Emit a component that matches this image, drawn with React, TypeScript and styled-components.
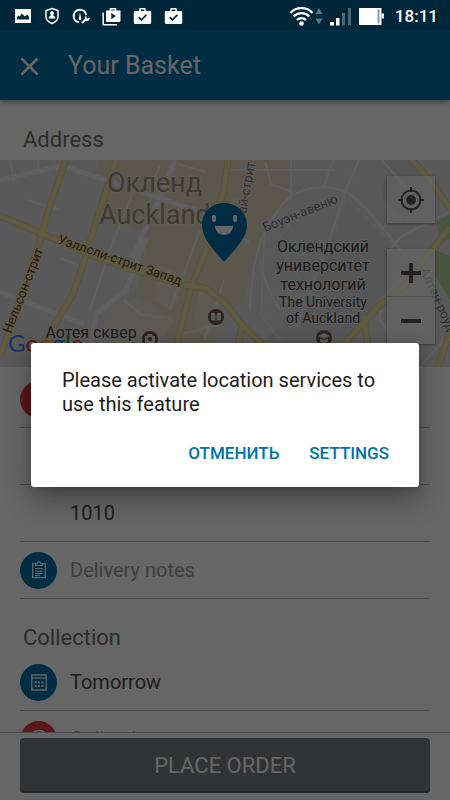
import React from "react";
import styled, { createGlobalStyle } from "styled-components";

const GlobalStyle = createGlobalStyle`
  *, *::before, *::after { box-sizing: border-box; }
  body { margin: 0; background: #fff; font-family: Roboto, "Noto Sans", sans-serif; }
  button, input { font: inherit; }
`;

const Screen = styled.div`
  position: relative;
  display: flex;
  flex-direction: column;
  height: 100vh;
  overflow: hidden;
  background: #fff;
`;

const StatusBar = styled.div`
  position: relative;
  z-index: 3;
  flex: none;
  display: flex;
  align-items: center;
  justify-content: space-between;
  height: 30px;
  padding: 2px 12px 0 14px;
  background: #00263a;
  color: #fff;
`;

const StatusGroup = styled.div<{ $gap: number }>`
  display: flex;
  align-items: center;
  gap: ${(p) => p.$gap}px;
`;

const Clock = styled.time`
  margin-left: 4px;
  font-size: 17px;
  line-height: 24px;
  font-weight: 500;
`;

const Header = styled.header`
  position: relative;
  z-index: 1;
  flex: none;
  display: flex;
  align-items: center;
  gap: 28px;
  height: 70px;
  padding: 2px 19px 0;
  background: #0072ab;
  box-shadow: 0 2px 6px rgba(0, 0, 0, 0.4);
`;

const CloseButton = styled.button`
  display: flex;
  padding: 0;
  border: 0;
  background: none;
  color: #fff;
`;

const Title = styled.h1`
  margin: 0;
  font-size: 25px;
  line-height: 32px;
  font-weight: 400;
  color: #fff;
`;

const Content = styled.main`
  flex: 1;
  min-height: 0;
  overflow: hidden;
`;

const SectionTitle = styled.h2<{ $height: number; $bottom: number }>`
  display: flex;
  align-items: flex-end;
  height: ${(p) => p.$height}px;
  margin: 0;
  padding: 0 23px ${(p) => p.$bottom}px;
  font-size: 22px;
  line-height: 32px;
  font-weight: 400;
  color: #707070;
`;

const MapPanel = styled.section`
  position: relative;
  height: 207px;
  margin-bottom: 4px;
  overflow: hidden;
  background: #e2e2e2;
`;

const MapDrawing = styled.svg`
  display: block;
  width: 100%;
  height: 100%;
`;

const MapControls = styled.div`
  position: absolute;
  top: 16px;
  right: 15px;
  display: flex;
  flex-direction: column;
  gap: 26px;
`;

const ControlGroup = styled.div`
  display: flex;
  flex-direction: column;
  background: rgba(255, 255, 255, 0.6);
  box-shadow: 0 1px 3px rgba(0, 0, 0, 0.4);
`;

const MapButton = styled.button`
  display: flex;
  align-items: center;
  justify-content: center;
  width: 48px;
  height: 47px;
  padding: 0;
  border: 0;
  background: none;
  color: #555;

  & + & {
    height: 48px;
    border-top: 1px solid #c4c4c4;
  }
`;

const Fields = styled.div`
  padding: 0 20px;
`;

const Row = styled.label`
  display: flex;
  align-items: center;
  gap: 13px;
  height: 57px;
  border-bottom: 1px solid #bdbdbd;
`;

const Badge = styled.span<{ $color?: string }>`
  flex: none;
  display: flex;
  align-items: center;
  justify-content: center;
  width: 37px;
  height: 37px;
  border-radius: 50%;
  background: ${(p) => p.$color ?? "transparent"};
  color: #fff;
`;

const Field = styled.input`
  flex: 1;
  min-width: 0;
  padding: 0;
  border: 0;
  outline: 0;
  background: none;
  font-size: 20px;
  line-height: 28px;
  color: #4c4c4c;

  &::placeholder {
    color: #9b9b9b;
    opacity: 1;
  }
`;

const Footer = styled.footer`
  flex: none;
  padding: 5px 20px 7px;
  border-top: 1px solid #b8b8b8;
  background: #fff;
`;

const OrderButton = styled.button`
  width: 100%;
  height: 55px;
  border: 0;
  border-radius: 4px;
  background: #7b7d80;
  box-shadow: inset 0 -2px 0 #626467;
  font-size: 22px;
  line-height: 32px;
  color: #fff;
`;

const Scrim = styled.div`
  position: absolute;
  inset: 0;
  z-index: 2;
  display: flex;
  align-items: center;
  justify-content: center;
  padding: 30px 31px 0;
  background: rgba(0, 0, 0, 0.6);
`;

const Dialog = styled.div`
  flex: 1;
  padding: 25px 22px 14px 31px;
  border-radius: 3px;
  background: #fff;
  box-shadow: 0 14px 28px rgba(0, 0, 0, 0.3), 0 2px 8px rgba(0, 0, 0, 0.2);
`;

const Message = styled.p`
  margin: 0 0 17px;
  font-size: 20px;
  line-height: 24px;
  color: #1c1c1c;
`;

const Actions = styled.div`
  display: flex;
  justify-content: flex-end;
  gap: 14px;
`;

const Action = styled.button`
  height: 40px;
  padding: 0 8px;
  border: 0;
  background: none;
  font-size: 17px;
  line-height: 24px;
  font-weight: 500;
  color: #0072a8;
`;

const PhotoIcon = () => (
  <svg width="18" height="18" viewBox="0 0 18 18" aria-hidden="true">
    <path fill="currentColor" fillRule="evenodd" d="M1 2h16v14H1zM3 12.5h12V9.7l-1.8-2.2-2.4 2-3-3L5.800 9.500 4.600 8.500 3 10z" />
  </svg>
);

const ShieldIcon = () => (
  <svg width="16" height="18" viewBox="0 0 16 18" aria-hidden="true">
    <path fill="none" stroke="currentColor" strokeWidth="1.500" d="M8 1.500 14 3.500v6c0 3.200-2.600 5.700-6 7-3.400-1.300-6-3.800-6-7v-6z" />
    <path fill="currentColor" d="M8 4.200a2 2 0 0 1 1.400 3.400L9.500 9l1.700.8V11.500H4.800V9.800L6.500 9l.1-1.400A2 2 0 0 1 8 4.200z" />
  </svg>
);

const GaugeIcon = () => (
  <svg width="18" height="18" viewBox="0 0 18 18" aria-hidden="true">
    <path fill="none" stroke="currentColor" strokeWidth="2" d="M6.800 15.200A6.300 6.300 0 1 1 14.200 8" />
    <path fill="currentColor" d="M8 5.500 9.200 11.200a1.300 1.300 0 1 1-2.400 0z" />
    <path fill="none" stroke="currentColor" strokeWidth="1.800" d="m10 16 3.500-3.500M13.700 9.400v3h3" />
    <path fill="none" stroke="currentColor" strokeWidth="1.400" d="M13.400 12.800c1.600 1 3.600.2 3.800-1.800" />
  </svg>
);

const ShopIcon = () => (
  <svg width="19" height="19" viewBox="0 0 19 19" aria-hidden="true">
    <path fill="none" stroke="currentColor" strokeWidth="1.500" d="M1.200 5.500v12.200h14M8.500 4V1.800h5V4" />
    <path fill="currentColor" fillRule="evenodd" d="M4 3.500h14.500v10.300a1.200 1.200 0 0 1-1.200 1.200H5.200A1.200 1.200 0 0 1 4 13.800zM9.300 6v6.300L14 9.100z" />
  </svg>
);

const BagCheckIcon = () => (
  <svg width="19" height="18" viewBox="0 0 19 18" aria-hidden="true">
    <path fill="none" stroke="currentColor" strokeWidth="1.600" d="M6.500 4.500 7.300 1.800h4.400l.8 2.700" />
    <path fill="currentColor" d="M1.800 4h15.400a1 1 0 0 1 1 1v10.500a1.500 1.500 0 0 1-1.500 1.500H2.300a1.500 1.500 0 0 1-1.500-1.500V5a1 1 0 0 1 1-1z" />
    <path fill="none" stroke="#00263a" strokeWidth="1.700" d="m5.700 10.200 2.700 2.600 5-5" />
  </svg>
);

const WifiIcon = () => (
  <svg width="34" height="22" viewBox="0 0 34 22" aria-hidden="true">
    <g fill="none" stroke="currentColor" strokeWidth="2.300">
      <path d="M1.300 8a15.500 15.500 0 0 1 22.400 0M4.700 11.500a10.900 10.900 0 0 1 15.600 0M8 15a6.300 6.300 0 0 1 9 0" />
    </g>
    <circle cx="12.500" cy="18.500" r="2.300" fill="currentColor" />
    <path fill="#5d7684" d="m30 3 3.500 6h-7zM30 19.500l3.500-6h-7z" />
  </svg>
);

const SignalIcon = () => (
  <svg width="22" height="19" viewBox="0 0 22 19" aria-hidden="true">
    <path fill="currentColor" d="M0 15h4v3.500H0zM6 11h3.500v7.500H6z" />
    <path fill="#4d6675" d="M12 6h3v12.500h-3zM18 1h3v17.500h-3z" />
  </svg>
);

const BatteryIcon = () => (
  <svg width="25" height="19" viewBox="0 0 25 19" aria-hidden="true">
    <path fill="currentColor" d="M0 1h21v17H0zM22.500 6.500H25v5h-2.500z" />
    <path fill="#8d9ca5" d="M18.500 2.500h2v14h-2z" />
    <path fill="currentColor" d="M21 1h1.500v17H21z" />
  </svg>
);

const CloseIcon = () => (
  <svg width="21" height="21" viewBox="0 0 21 21" aria-hidden="true">
    <path d="m2.500 2.500 16 16m0-16-16 16" fill="none" stroke="currentColor" strokeWidth="2.500" />
  </svg>
);

const LocateIcon = () => (
  <svg width="28" height="28" viewBox="0 0 28 28" aria-hidden="true">
    <circle cx="14" cy="14" r="9.500" fill="none" stroke="currentColor" strokeWidth="2" />
    <circle cx="14" cy="14" r="5" fill="currentColor" />
    <path d="M14 1v5m0 16v5M1 14h5m16 0h5" stroke="currentColor" strokeWidth="2" />
  </svg>
);

const PlusIcon = () => (
  <svg width="22" height="22" viewBox="0 0 22 22" aria-hidden="true">
    <path d="M11 1v20M1 11h20" stroke="currentColor" strokeWidth="4" />
  </svg>
);

const MinusIcon = () => (
  <svg width="22" height="22" viewBox="0 0 22 22" aria-hidden="true">
    <path d="M1 11h20" stroke="currentColor" strokeWidth="4" />
  </svg>
);

const ClipboardIcon = () => (
  <svg width="16" height="18" viewBox="0 0 16 18" fill="none" stroke="currentColor" aria-hidden="true">
    <path strokeWidth="1.300" d="M4.500 2.700H1.700v14h12.600v-14h-2.800" />
    <path strokeWidth="1.200" d="M4.500 4.500V2.700h1.700a1.800 1.800 0 0 1 3.600 0h1.700v1.800z" />
    <path strokeWidth="1.200" d="M4 7.500h8M4 10h8M4 12.500h8M4 14.600h5" />
  </svg>
);

const CalendarIcon = () => (
  <svg width="16" height="17" viewBox="0 0 16 17" fill="none" stroke="currentColor" aria-hidden="true">
    <path strokeWidth="1.300" d="M.8 1h14.400v15H.8zM.8 4.200h14.400" />
    <path strokeWidth="2" strokeDasharray="2 1.500" d="M3.500 8.300h9M3.500 12h9" />
  </svg>
);

const ClockIcon = () => (
  <svg width="20" height="20" viewBox="0 0 20 20" fill="none" stroke="currentColor" aria-hidden="true">
    <circle cx="10" cy="10" r="8.500" strokeWidth="1.400" />
    <path strokeWidth="1.400" d="M10 5v5h4" />
  </svg>
);

const StreetMap = () => (
  <MapDrawing viewBox="0 160 450 207" preserveAspectRatio="xMidYMid slice" role="img" aria-label="Auckland">
    <rect y="160" width="450" height="207" fill="#dedede" />
    <path fill="#e4d9be" d="M98 160h193v38l-26 28-14 40-8 38-22 6-20 57h-30l-12-60-25-10 15-60-15-10-22-6z" />
    <path fill="#d6d6d6" d="m347 200 62 62-40 50-30 34h-80l55-50z" />
    <path fill="#d4d4d4" d="m388 160 30 0 10 20-24 40-22-22z" />
    <path fill="#e7e2cc" d="m108 305 28-4 38 18-14 24h-58zM160 265l26 12-12 32-22-8zM200 286l22 18-12 30-18 0z" />
    <path fill="#b5d69c" d="m436 222 14-7v24l-9 2zM435 250l15 6v44l-15-24z" />
    <g fill="none" stroke="#eeeeee" strokeLinejoin="round">
      <path strokeWidth="5" d="m0 180 62-14 44 14 54 18 70 24M175 160l-15 38-28 60M146 238l-20 52-30 24-9 53M0 292l84 32" />
      <path strokeWidth="2" d="m291 160 0 40M250 310c2-64 16-90 40-113 16-12 40-12 57-5 20 14 42 44 60 66M359 160l-14 32-15 46-34 90M333 160l-10 30M230 170l105 0M265 162l6 22 22 8M382 160l30 34M450 212l-48 24-14 16M262 270c10 30 16 40 30 50" />
      <path strokeWidth="2" d="m10 160 4 22M38 160v12M28 200l32 10M65 248l12 4M134 190l-24 60-20 60M160 165l-10 28M178 164l28 8M172 172l-26 48M196 176l-12 22M200 230l-30 80M224 280l-20 60M124 300l16 14 24 4M176 335l44-10M60 258l16 6M232 200l12 6M225 230l24 12M380 300v20l14 20M420 367l24-27" />
      <path strokeWidth="1" d="m264 235 24 26 30 44M280 215l40 50M265 225l-4 90 40 52M300 210l-22 30" />
    </g>
    <g fill="none" strokeLinejoin="round">
      <g stroke="#dccb94" strokeWidth="7">
        <path d="m66 160-16 45-12 42-13 40-25 70M116 160l-18 56-16 52-10 28-17 28-13 43" />
        <path d="m0 216 43 18 60 26 80 25 22 3 20 15 18 23 26 25M228 160l-4 30-14 50-19 48-20 79M412 160l18 20 20 28M450 228l-25 30-20 28-24 18-39 42M364 316l6 51M242 326l-8 41M450 332l-12 35" />
      </g>
      <g stroke="#f0dfa4" strokeWidth="5">
        <path d="m66 160-16 45-12 42-13 40-25 70M116 160l-18 56-16 52-10 28-17 28-13 43" />
        <path d="m0 216 43 18 60 26 80 25 22 3 20 15 18 23 26 25M228 160l-4 30-14 50-19 48-20 79M412 160l18 20 20 28M450 228l-25 30-20 28-24 18-39 42M364 316l6 51M242 326l-8 41M450 332l-12 35" />
      </g>
    </g>
    <g fontFamily="Roboto, Noto Sans, sans-serif" stroke="#e6e6e6" paintOrder="stroke" strokeLinejoin="round">
      <g fontSize="27" fill="#99917c" strokeWidth="3" stroke="#e9e2cd">
        <text x="107" y="192">Окленд</text>
        <text x="99" y="224">Auckland</text>
      </g>
      <g fontSize="13" fill="#5a4017" strokeWidth="2" stroke="#f0dfa4">
        <text transform="translate(57 243) rotate(19)">Уэллсли-стрит Запад</text>
        <text transform="translate(11 334) rotate(-69)">Нельсон-стрит</text>
      </g>
      <g fontSize="13" fill="#777" strokeWidth="2">
        <text transform="translate(265 232) rotate(-22)">Боуэн-авеню</text>
        <text transform="translate(246 214) rotate(-80)">ай-стрит</text>
        <text transform="translate(420 270) rotate(66)">Алтен-роуд</text>
      </g>
      <g fontSize="16" fill="#444" strokeWidth="2" textAnchor="middle">
        <text x="323" y="252">Оклендский</text>
        <text x="323" y="271">университет</text>
        <text x="323" y="290">технологий</text>
        <text x="91" y="338">Аотея сквер</text>
        <g fontSize="14">
          <text x="323" y="307">The University</text>
          <text x="323" y="323">of Auckland</text>
        </g>
      </g>
    </g>
    <g fill="#71564f">
      <circle cx="216" cy="317" r="8" />
      <circle cx="150" cy="339" r="8" />
      <circle cx="324" cy="338" r="8" />
    </g>
    <g fill="#e6e6e6">
      <path d="M211 313q3-1 4.500 1v7q-2-1.500-4.500-1zM221 313q-3-1-4.500 1v7q2-1.500 4.500-1z" />
      <path d="M145 336h2l1-2h4l1 2h2v7h-10z" />
      <path d="m318 336 6-3 6 3-6 3zM320 338.500v3l4 2 4-2v-3l-4 2z" />
      <circle cx="150" cy="339" r="2" fill="#71564f" />
    </g>
    <text x="8" y="352" fontFamily="Lato, Roboto, sans-serif" fontSize="24">
      <tspan fill="#4285f4">G</tspan><tspan fill="#ea4335">o</tspan><tspan fill="#fbbc05">o</tspan><tspan fill="#4285f4">g</tspan><tspan fill="#34a853">l</tspan><tspan fill="#ea4335">e</tspan>
    </text>
    <path fill="#0072ab" d="M224 203c13 0 23 10 23 22 0 14-14 26-23 37-9-11-22-23-22-37 0-12 9-22 22-22z" />
    <g fill="#fff">
      <rect x="212" y="215" width="4" height="7" rx="2" />
      <rect x="233" y="215" width="4" height="7" rx="2" />
      <path d="M215 226h18c0 5-4 9-9 9s-9-4-9-9z" />
    </g>
  </MapDrawing>
);

type FieldRowProps = {
  label: string;
  value?: string;
  color?: string;
  icon?: React.ReactNode;
  placeholder?: string;
};

const FieldRow = ({ label, value = "", color, icon, placeholder }: FieldRowProps) => (
  <Row>
    <Badge $color={color}>{icon}</Badge>
    <Field aria-label={label} defaultValue={value} placeholder={placeholder} />
  </Row>
);

const BLUE = "#0072ab";
const RED = "#e8383f";

export default function App() {
  return (
    <>
      <GlobalStyle />
      <Screen>
        <StatusBar>
          <StatusGroup $gap={12}>
            <PhotoIcon />
            <ShieldIcon />
            <GaugeIcon />
            <ShopIcon />
            <BagCheckIcon />
            <BagCheckIcon />
          </StatusGroup>
          <StatusGroup $gap={7}>
            <WifiIcon />
            <SignalIcon />
            <BatteryIcon />
            <Clock>18:11</Clock>
          </StatusGroup>
        </StatusBar>
        <Header>
          <CloseButton aria-label="Close"><CloseIcon /></CloseButton>
          <Title>Your Basket</Title>
        </Header>
        <Content>
          <SectionTitle $height={60} $bottom={4}>Address</SectionTitle>
          <MapPanel>
            <StreetMap />
            <MapControls>
              <ControlGroup>
                <MapButton aria-label="My location"><LocateIcon /></MapButton>
              </ControlGroup>
              <ControlGroup>
                <MapButton aria-label="Zoom in"><PlusIcon /></MapButton>
                <MapButton aria-label="Zoom out"><MinusIcon /></MapButton>
              </ControlGroup>
            </MapControls>
          </MapPanel>
          <Fields>
            <FieldRow label="Street" color={RED} />
            <FieldRow label="City" />
            <FieldRow label="Postcode" value="1010" />
            <FieldRow label="Delivery notes" color={BLUE} icon={<ClipboardIcon />} placeholder="Delivery notes" />
          </Fields>
          <SectionTitle $height={55} $bottom={0}>Collection</SectionTitle>
          <Fields>
            <FieldRow label="Collection day" value="Tomorrow" color={BLUE} icon={<CalendarIcon />} />
            <FieldRow label="Collection time" placeholder="Collection" color={RED} icon={<ClockIcon />} />
          </Fields>
        </Content>
        <Footer>
          <OrderButton>PLACE ORDER</OrderButton>
        </Footer>
        <Scrim>
          <Dialog role="alertdialog" aria-modal="true" aria-labelledby="location-message">
            <Message id="location-message">Please activate location services to use this feature</Message>
            <Actions>
              <Action>ОТМЕНИТЬ</Action>
              <Action>SETTINGS</Action>
            </Actions>
          </Dialog>
        </Scrim>
      </Screen>
    </>
  );
}
